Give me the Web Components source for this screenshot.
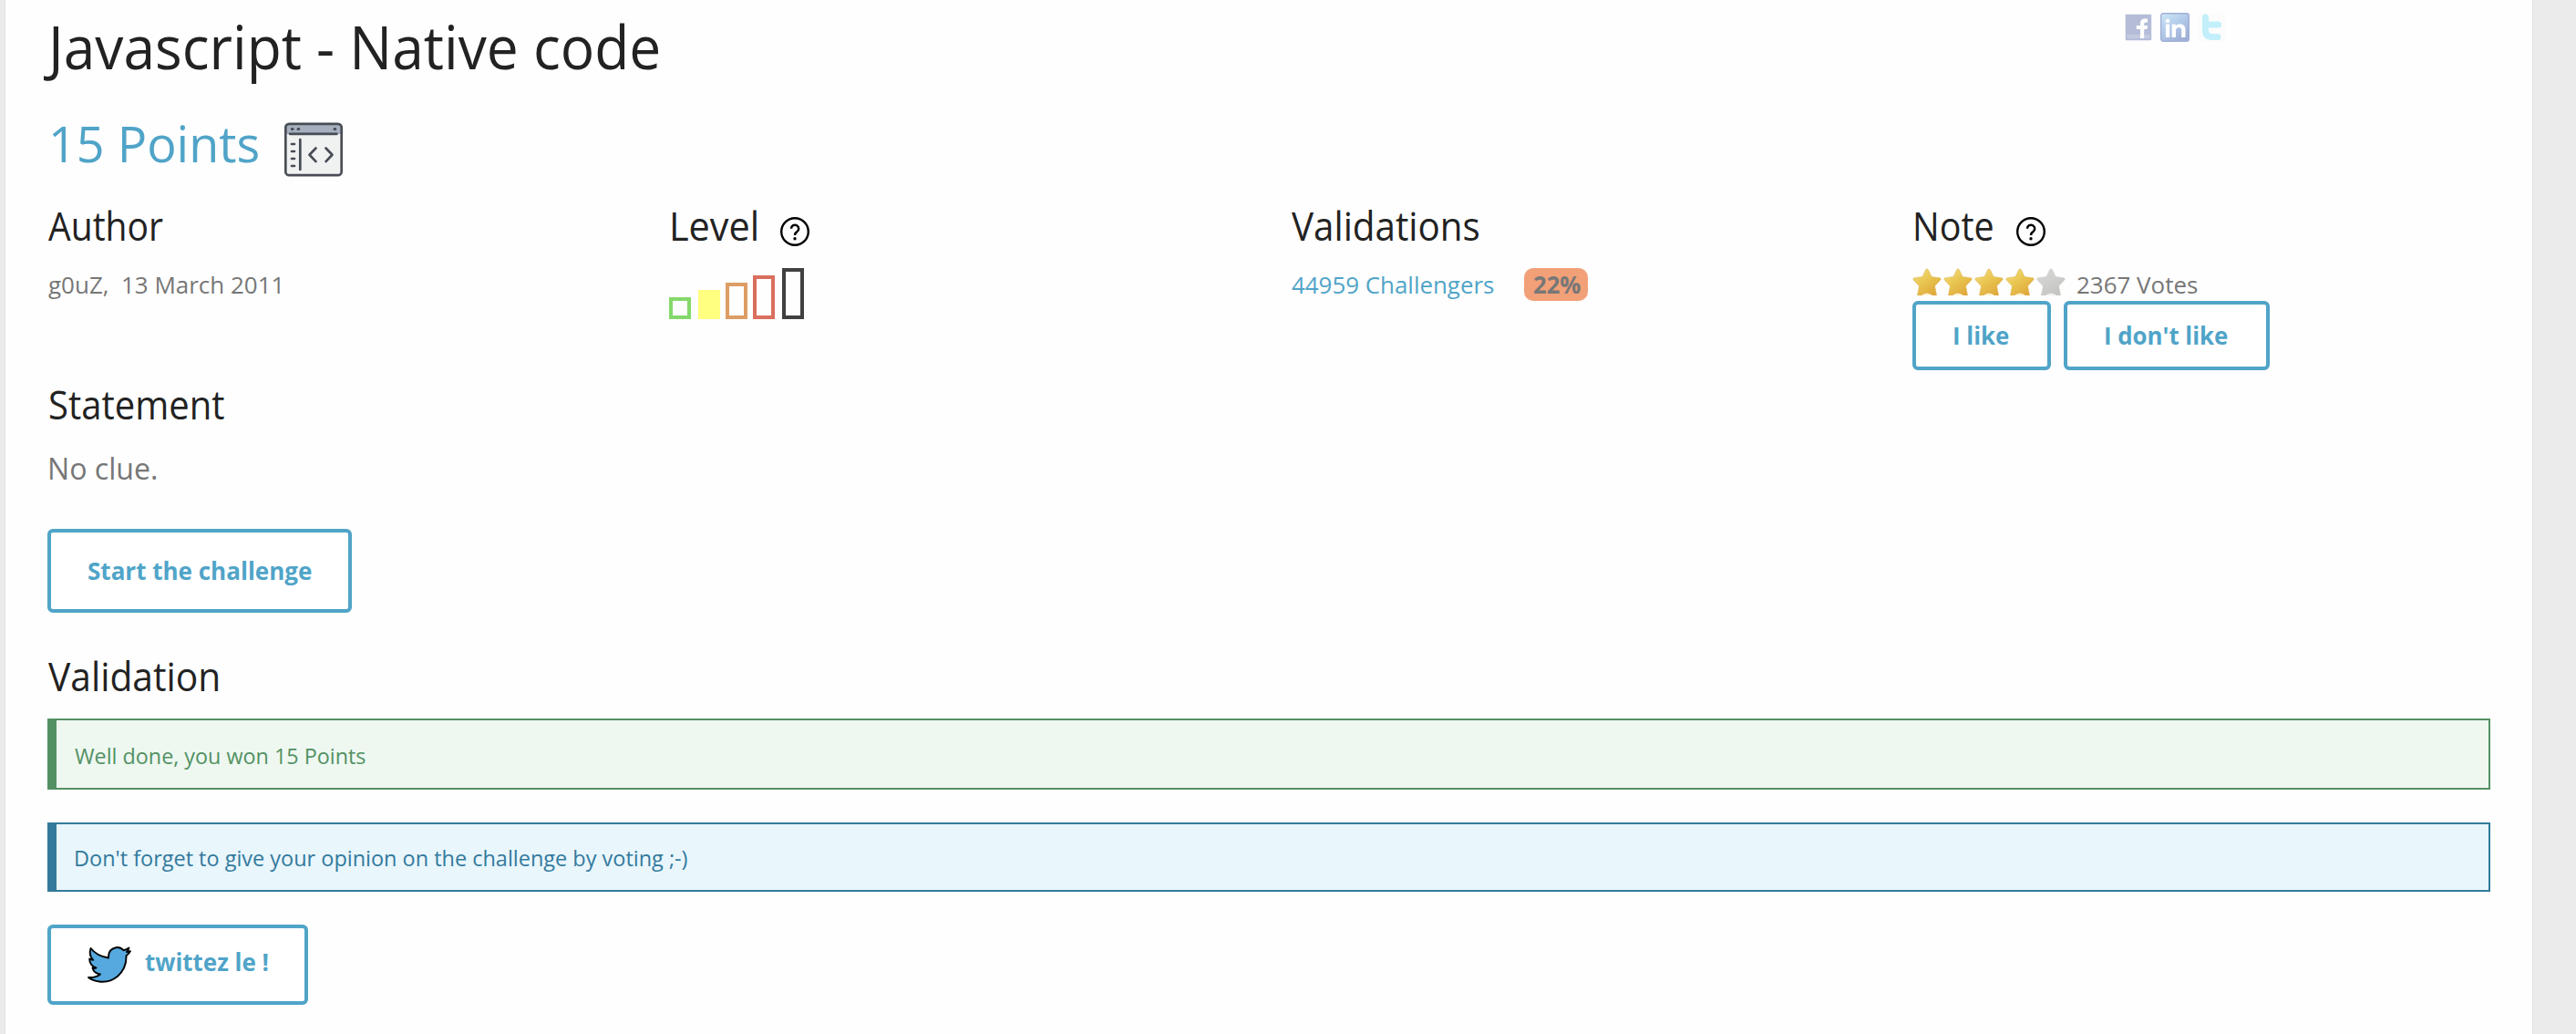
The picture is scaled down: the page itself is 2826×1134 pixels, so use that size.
<!DOCTYPE html>
<html lang="en"><head><meta charset="utf-8"><title>Javascript - Native code</title>
<style>
html,body{margin:0;height:100%;overflow:hidden;background:#ebebeb}
body{font-family:"Open Sans","Noto Sans",sans-serif;color:#777}
</style></head><body>
<challenge-page></challenge-page>
<script>
const define=(name,html,after)=>customElements.define(name,class extends HTMLElement{
  connectedCallback(){ if(this.shadowRoot)return;
    const r=this.attachShadow({mode:'open'});
    r.innerHTML=typeof html==='function'?html(this):html; if(after)after(this,r);}
});
const ctx=document.createElement('canvas').getContext('2d');

/* One line of text: s=size, w=inked width, l=left bearing offset, h=line box, c=colour, b=weight */
define('text-line',e=>{
  const a=n=>e.getAttribute(n), s=+a('s'), wt=a('b')||400, t=e.textContent;
  ctx.font=`${wt} ${s}px "Open Sans"`;
  const m=ctx.measureText(t), ink=m.actualBoundingBoxRight+m.actualBoundingBoxLeft;
  const k=+a('w')/ink, pad=(+a('l')||0)+m.actualBoundingBoxLeft*k;
  return `<style>:host{display:block;flex:none;width:${+a('w')+(+a('l')||0)}px;height:${a('h')}px;line-height:${a('h')}px;font-size:${s}px;font-weight:${wt};color:${a('c')||'inherit'};white-space:pre}
  span{display:inline-block;margin-left:${pad}px;transform:scaleX(${k});transform-origin:0 50%}</style><span><slot></slot></span>`;
});

define('app-button',`<style>:host{display:flex;box-sizing:border-box;flex:none;border:4px solid #50a4c8;border-radius:6px;color:#50a4c8;background:#fff}</style><slot></slot>`);
define('alert-box',`<style>:host{display:block;box-sizing:border-box;width:2680px;border:2px solid var(--edge);border-left-width:10px;background:var(--fill);color:var(--edge)}</style><slot></slot>`);
define('help-icon',`<style>:host,svg{display:block;flex:none}</style><svg width="32" height="32" viewBox="0 0 32 32" fill="none" stroke="#000"><circle cx="16" cy="16" r="14.8" stroke-width="2.4"/><path d="M12 12.7a4.1 4.1 0 1 1 6.2 3.6c-1.6.9-2.2 1.500-2.2 3.6" stroke-width="2.5"/><circle cx="16" cy="23.8" r="1.7" fill="#000" stroke="none"/></svg>`);
define('code-icon',`<style>:host,svg{display:block;flex:none}</style><svg width="64" height="60" viewBox="0 0 64 60" stroke-linecap="round" stroke-linejoin="round"><rect x="1.3" y="1.8" width="61.4" height="56.4" rx="4" fill="#f0f2f2"/><path d="M1.3 13V6q0-4.2 4-4.2h53.4q4 0 4 4.2v7z" fill="#a5afbf"/><g fill="none" stroke="#484c55" stroke-width="2.7"><rect x="1.3" y="1.8" width="61.4" height="56.4" rx="4"/><path d="M6 12.8h51.5M17.3 19v33M34.5 28.5l-7 7.3 7 7.3M45.5 28.5l7 7.3-7 7.3M8 24h3M8 32h3M8 40h3M8 48h3"/><path d="M8.3 7.5h.8M15 7.5h.8M55 7.5h.8" stroke-width="3"/></g></svg>`);
define('level-bars',()=>`<style>:host{display:flex;align-items:flex-end;height:56px}i{display:block;box-sizing:border-box;width:24px;border:4px solid}</style>`+
 [['#84d86b',24,0],['#ffff80',32,8],['#dd9d64',40,6],['#d96f5d',48,6],['#404040',56,8]].map(([c,h,g],i)=>`<i style="color:${c};height:${h}px;margin-left:${g}px;${i==1?'background:'+c:''}"></i>`).join(''));
define('star-rating',()=>`<style>:host{display:flex;gap:2px}svg{display:block}</style>`+[1,1,1,1,0].map((on,i)=>`<svg width="32" height="30" viewBox="0 0 32 30"><defs><linearGradient id="g${i}" x1="0" y1="0" x2=".7" y2="1"><stop offset="0" stop-color="${on?'#f3e08a':'#dadad8'}"/><stop offset=".5" stop-color="${on?'#e9c650':'#cfcfcd'}"/><stop offset="1" stop-color="${on?'#dfa93c':'#c4c4c2'}"/></linearGradient></defs><path d="M16 .8Q17 .8 17.8 2.6L21 9.4l9 1.4q2.2.6.6 2.4L24.6 19.8 26.6 30H22Q16 25 10 30H5.4L7.4 19.8 1.3 13.2Q-.2 11.4 2 10.8L11 9.4 14.2 2.6Q15 .8 16 .8Z" fill="url(#g${i})" stroke="${on?'#dfb254':'#c6c6c4'}" stroke-opacity=".6" stroke-width=".8"/><path d="M10.500 30Q16 25.5 21.500 30Z" fill="${on?'#fbf1cd':'#f0f0f0'}"/></svg>`).join(''));
define('share-links',`<style>:host{display:flex;gap:8px}svg{display:block}</style>
<svg width="32" height="32" viewBox="0 0 32 32"><rect x="1.7" y="1.7" width="28.5" height="28.5" rx="1" fill="#b4bcd8"/><rect x="3.5" y="24" width="25" height="4.2" fill="#c3cae0"/><path d="M18 28v-10h-4.3v-4H18v-2.5q0-5 5-5h3v4h-2.2q-1.6 0-1.6 1.7V14H26l-.5 4h-3.3v10z" fill="#fff"/></svg>
<svg width="32" height="32" viewBox="0 0 32 32"><defs><linearGradient id="l" x1="0" y1="0" x2=".7" y2="1"><stop offset="0" stop-color="#cfe8f5"/><stop offset=".5" stop-color="#b3cbea"/><stop offset="1" stop-color="#9faed6"/></linearGradient></defs><rect x=".7" y=".7" width="30.6" height="30.6" rx="2.5" fill="url(#l)" stroke="#a0b0d6" stroke-width="1.4"/><circle cx="8" cy="9" r="2.3" fill="#fff"/><path d="M5.9 12.5h4.3V27H5.9zM12.7 12.5h4v2q1.6-2.3 4.8-2.3 6 0 6 6.5V27h-4.3v-7.5q0-3.5-2.8-3.5-3.4 0-3.4 3.8V27h-4.3z" fill="#fff"/></svg>
<svg width="32" height="32" viewBox="0 0 32 32"><rect width="32" height="32" fill="#fcfcfc"/><path d="M9.5 5v14q0 7.500 7.500 7.500h6M10 13h13.500" fill="none" stroke="#c3effa" stroke-width="7" stroke-linecap="round"/></svg>`);
define('bird-icon',`<style>:host,svg{display:block;flex:none}</style><svg width="48" height="40" viewBox="0 0 48 40"><path d="M3.600 2Q10 10.500 23 12.500 22.500 3 31 1.200q5-.8 8.500 3Q43 3.500 45.500 1.500q-.8 3-2.500 4.500 2-.2 4-.8-1.500 3-4.500 5 .5 13.500-9.500 22.500Q24 40 13 38.500 5.500 37.500 1 34q8 .5 13-3.500-7-1-8.500-7 2 .5 4 0Q2.200 21 2.200 13.500q2 1.200 4 1.300Q1 9.500 3.600 2Z" fill="#55a9de" stroke="#000" stroke-width="1.900" stroke-linejoin="round"/></svg>`);

define('challenge-page',`<style>
:host{display:block;box-sizing:border-box;width:2772px;height:1134px;margin-left:6px;padding-left:46px;background:#fefefe;box-shadow:0 0 0 1px #e3e3e3}
.row{display:flex}
.title{height:120px;justify-content:space-between;padding-right:336px}
.points{height:98px;gap:28px}
.cols{display:grid;grid-template-columns:repeat(4,682px);height:198px}
.head{display:flex;height:76px}
.badge{display:flex;box-sizing:border-box;width:70px;height:36px;padding-left:10px;background:#f2a078;border-radius:10px;margin-left:33px}
</style>
<div class="row title"><text-line s="66" w="675" l="-5" h="101" c="#222">Javascript - Native code</text-line><share-links style="padding-top:14px"></share-links></div>
<div class="row points"><text-line s="54" w="226.500" l="5" h="74" c="#50a4c8">15 Points</text-line><code-icon style="padding-top:14px"></code-icon></div>
<div class="cols">
<div><div class="head"><text-line s="44" w="126" l="1" h="58" c="#222">Author</text-line></div><text-line s="26" w="254.500" l=".5" h="36">g0uZ,  13 March 2011</text-line></div>
<div><div class="head"><text-line s="44" w="92.500" l="4" h="58" c="#222">Level</text-line><help-icon style="padding:20px 0 0 25.500px"></help-icon></div><level-bars></level-bars></div>
<div><div class="head"><text-line s="44" w="205" l=".5" h="58" c="#222">Validations</text-line></div><div class="row"><text-line s="26" w="222" l=".5" h="36" c="#50a4c8">44959 Challengers</text-line><div class="badge"><text-line s="26" b="700" w="52" h="36">22%</text-line></div></div></div>
<div><div class="head"><text-line s="44" w="84.500" l="4" h="58" c="#222">Note</text-line><help-icon style="padding:20px 0 0 25.500px"></help-icon></div><div class="row" style="height:36px"><star-rating></star-rating><text-line s="26" w="132" l="13" h="36">2367 Votes</text-line></div>
<div class="row" style="gap:14px"><app-button style="width:152px;height:76px"><text-line s="26" b="700" w="60" l="42" h="68">I like</text-line></app-button><app-button style="width:226px;height:76px"><text-line s="26" b="700" w="134" l="42" h="68">I don't like</text-line></app-button></div></div>
</div>
<text-line s="44" w="191" l="2.500" h="54" c="#222">Statement</text-line>
<text-line s="33" w="117" l="3" h="59" style="margin-top:14px">No clue.</text-line>
<app-button style="width:334px;height:92px;margin-top:37px"><text-line s="26" b="700" w="245" l="41" h="84">Start the challenge</text-line></app-button>
<text-line s="44" w="186.500" l="1" h="58" c="#222" style="margin-top:40px">Validation</text-line>
<alert-box style="height:78px;margin-top:18px;--edge:#539163;--fill:#eef8f1"><text-line s="24" w="319" l="19.500" h="78">Well done, you won 15 Points</text-line></alert-box>
<alert-box style="height:76px;margin-top:36px;--edge:#337a9c;--fill:#e9f6fc"><text-line s="24" w="671.500" l="20.500" h="74">Don't forget to give your opinion on the challenge by voting ;-)</text-line></alert-box>
<app-button style="width:286px;height:88px;margin-top:36px"><bird-icon style="padding:20px 0 0 40px"></bird-icon><text-line s="26" b="700" w="134.500" l="14.500" h="74">twittez le !</text-line></app-button>`);
</script></body></html>
